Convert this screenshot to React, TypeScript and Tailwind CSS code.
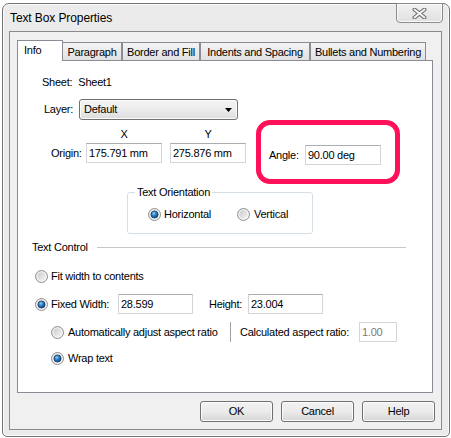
import React, { useId } from "react";

function Radio({ checked }: { checked?: boolean }) {
  const id = useId().replace(/:/g, "");
  return (
    <svg width="13" height="13" viewBox="0 0 13 13" className="shrink-0">
      <defs>
        <linearGradient id={`o${id}`} x1="0" y1="0" x2="1" y2="1">
          <stop offset="0" stopColor="#e8e8e8" />
          <stop offset="1" stopColor="#f7f7f7" />
        </linearGradient>
        <linearGradient id={`i${id}`} x1="0" y1="0" x2="1" y2="1">
          <stop offset="0" stopColor="#cbcbcb" />
          <stop offset="1" stopColor="#f4f4f4" />
        </linearGradient>
        <radialGradient id={`c${id}`} cx="0.4" cy="0.35" r="0.7">
          <stop offset="0" stopColor="#8ad0f5" />
          <stop offset="0.5" stopColor="#2477bd" />
          <stop offset="1" stopColor="#0d3f78" />
        </radialGradient>
      </defs>
      <circle cx="6.5" cy="6.5" r="6" fill={`url(#o${id})`} stroke="#8e8f8f" strokeWidth="1" />
      {checked ? (
        <circle cx="6.5" cy="6.5" r="3.6" fill={`url(#c${id})`} stroke="#1b3f66" strokeWidth="0.8" />
      ) : (
        <circle cx="6.5" cy="6.5" r="4" fill={`url(#i${id})`} />
      )}
    </svg>
  );
}

function Input({ value, w, disabled }: { value: string; w: string; disabled?: boolean }) {
  return (
    <div
      className={`${w} h-[20px] shrink-0 bg-white flex items-center pl-[2px] border ${
        disabled
          ? "border-[#d4d4d4] text-[#7a7a7a]"
          : "border-[#d3d5d9] border-t-[#abadb3] text-black"
      }`}
    >
      {value}
    </div>
  );
}

function Button({ label }: { label: string }) {
  return (
    <div className="w-[73px] h-[21px] rounded-[3px] border border-[#707070] bg-linear-to-b from-[#f2f2f2] via-[#ebebeb] to-[#d6d6d6] shadow-[inset_0_0_0_1px_#fcfcfc] flex items-center justify-center text-black">
      {label}
    </div>
  );
}

export default function App() {
  const tabs = [
    { label: "Paragraph", w: "w-[60px]", extra: "-ml-px" },
    { label: "Border and Fill", w: "w-[78px]", extra: "" },
    { label: "Indents and Spacing", w: "w-[110px]", extra: "" },
    { label: "Bullets and Numbering", w: "w-[116px]", extra: "" },
  ];
  return (
    <div className="w-[451px] h-[438px] bg-white pl-[2px] pt-[3px] font-['Liberation_Sans',Arial,sans-serif] text-[11px] leading-[13px] tracking-[-0.25px] text-black">
      <div className="relative w-[448px] h-[434px] rounded-t-[7px] rounded-b-[5px] border border-[#747474] bg-[#ebebeb] shadow-[inset_0_0_0_1px_#f9f9f9] flex flex-col">
        {/* Title bar */}
        <div className="h-[27px] shrink-0 flex items-center pl-[7px] pt-[1px] text-[12px] tracking-[-0.1px]">
          Text Box Properties
        </div>
        {/* Close button */}
        <div className="absolute left-[393px] top-[-1px] w-[47px] h-[20px] rounded-b-[4px] border border-[#8a8a8a] bg-linear-to-b from-[#f2f2f2] to-[#e0e0e0] shadow-[inset_0_0_0_1px_#fafafa] flex items-center justify-center">
          <svg width="15" height="11" viewBox="0 0 15 11">
            <path d="M2.5 1.5 L12.5 9.5 M12.5 1.5 L2.5 9.5" stroke="#6b6b6b" strokeWidth="4" strokeLinecap="round" />
            <path d="M2.5 1.5 L12.5 9.5 M12.5 1.5 L2.5 9.5" stroke="#f4f4f4" strokeWidth="2" strokeLinecap="round" />
          </svg>
        </div>
        {/* Client area */}
        <div className="ml-[6px] w-[433px] h-[399px] border border-[#8b8b8b] bg-[#f0f0f0] flex flex-col pl-[7px] pt-[8px]">
          {/* Tabs */}
          <div className="flex items-end h-[21px]">
            <div className="relative z-10 w-[46px] h-[21px] bg-white border border-b-0 border-[#898c95] pl-[6px] pt-[3px]">
              Info
            </div>
            {tabs.map((t) => (
              <div
                key={t.label}
                className={`${t.w} ${t.extra} h-[19px] border border-[#898c95] bg-linear-to-b from-[#f4f4f4] to-[#e1e1e1] flex justify-center pt-[3px] whitespace-nowrap`}
              >
                {t.label}
              </div>
            ))}
          </div>
          {/* Panel */}
          <div className="-mt-px w-[416px] h-[333px] border border-[#898c95] bg-white flex flex-col">
            {/* Sheet */}
            <div className="mt-[15px] ml-[24px] flex items-center h-[13px]">
              <span>Sheet:</span>
              <span className="ml-[6px]">Sheet1</span>
            </div>
            {/* Layer */}
            <div className="mt-[10px] ml-[26px] flex items-center h-[21px]">
              <span className="w-[35px]">Layer:</span>
              <div className="w-[159px] h-[21px] rounded-[3px] border border-[#707070] bg-linear-to-b from-[#f4f4f4] via-[#ececec] to-[#dcdcdc] shadow-[inset_0_0_0_1px_#fbfbfb] flex items-center justify-between pl-[4px] pr-[5px]">
                <span>Default</span>
                <svg width="7" height="4" viewBox="0 0 7 4">
                  <path d="M0 0 H7 L3.5 4 Z" fill="#000" />
                </svg>
              </div>
            </div>
            {/* Origin + Angle */}
            <div className="flex ml-[33px]">
              <div className="flex flex-col">
                <div className="mt-[8px] h-[13px] flex pl-[35px]">
                  <span className="w-[76px] text-center">X</span>
                  <span className="ml-[8px] w-[76px] text-center">Y</span>
                </div>
                <div className="mt-[2px] h-[20px] flex items-center">
                  <span className="w-[35px]">Origin:</span>
                  <Input value="175.791 mm" w="w-[76px]" />
                  <div className="ml-[8px]">
                    <Input value="275.876 mm" w="w-[76px]" />
                  </div>
                </div>
              </div>
              <div className="ml-[10px] w-[144px] h-[64px] rounded-[14px] border-[5px] border-[#ff1159] flex items-center pt-[6px] pl-[8px]">
                <span className="w-[36px]">Angle:</span>
                <Input value="90.00 deg" w="w-[76px]" />
              </div>
            </div>
            {/* Text Orientation group */}
            <div className="relative mt-[8px] ml-[109px] w-[186px] h-[42px] rounded-[3px] border border-[#d5dfe5] flex items-start pt-[15px] pl-[20px]">
              <span className="absolute left-[7px] top-[-7px] bg-white px-[2px]">Text Orientation</span>
              <div className="w-[89px] flex items-center gap-[3px] h-[13px]">
                <Radio checked />
                <span>Horizontal</span>
              </div>
              <div className="flex items-center gap-[4px] h-[13px]">
                <Radio />
                <span>Vertical</span>
              </div>
            </div>
            {/* Text Control */}
            <div className="mt-[7px] ml-[14px] mr-[26px] flex items-center h-[13px]">
              <span>Text Control</span>
              <div className="ml-[9px] flex-1 h-px bg-[#c3c8cc]" />
            </div>
            <div className="mt-[16px] ml-[17px] flex items-center gap-[3px] h-[13px]">
              <Radio />
              <span>Fit width to contents</span>
            </div>
            <div className="mt-[11px] ml-[17px] flex items-center h-[20px]">
              <Radio checked />
              <span className="ml-[3px] w-[67px]">Fixed Width:</span>
              <Input value="28.599" w="w-[75px]" />
              <span className="ml-[16px] w-[39px]">Height:</span>
              <Input value="23.004" w="w-[75px]" />
            </div>
            <div className="mt-[8px] ml-[33px] flex items-center h-[20px]">
              <Radio />
              <span className="ml-[4px] w-[162px] whitespace-nowrap">Automatically adjust aspect ratio</span>
              <div className="w-px h-[20px] bg-[#a0a0a0]" />
              <span className="ml-[9px] w-[119px] whitespace-nowrap">Calculated aspect ratio:</span>
              <Input value="1.00" w="w-[38px]" disabled />
            </div>
            <div className="mt-[10px] ml-[33px] flex items-center gap-[4px] h-[13px]">
              <Radio checked />
              <span>Wrap text</span>
            </div>
          </div>
          {/* Buttons */}
          <div className="mt-[8px] flex justify-end gap-[8px] pr-[6px]">
            <Button label="OK" />
            <Button label="Cancel" />
            <Button label="Help" />
          </div>
        </div>
      </div>
    </div>
  );
}
